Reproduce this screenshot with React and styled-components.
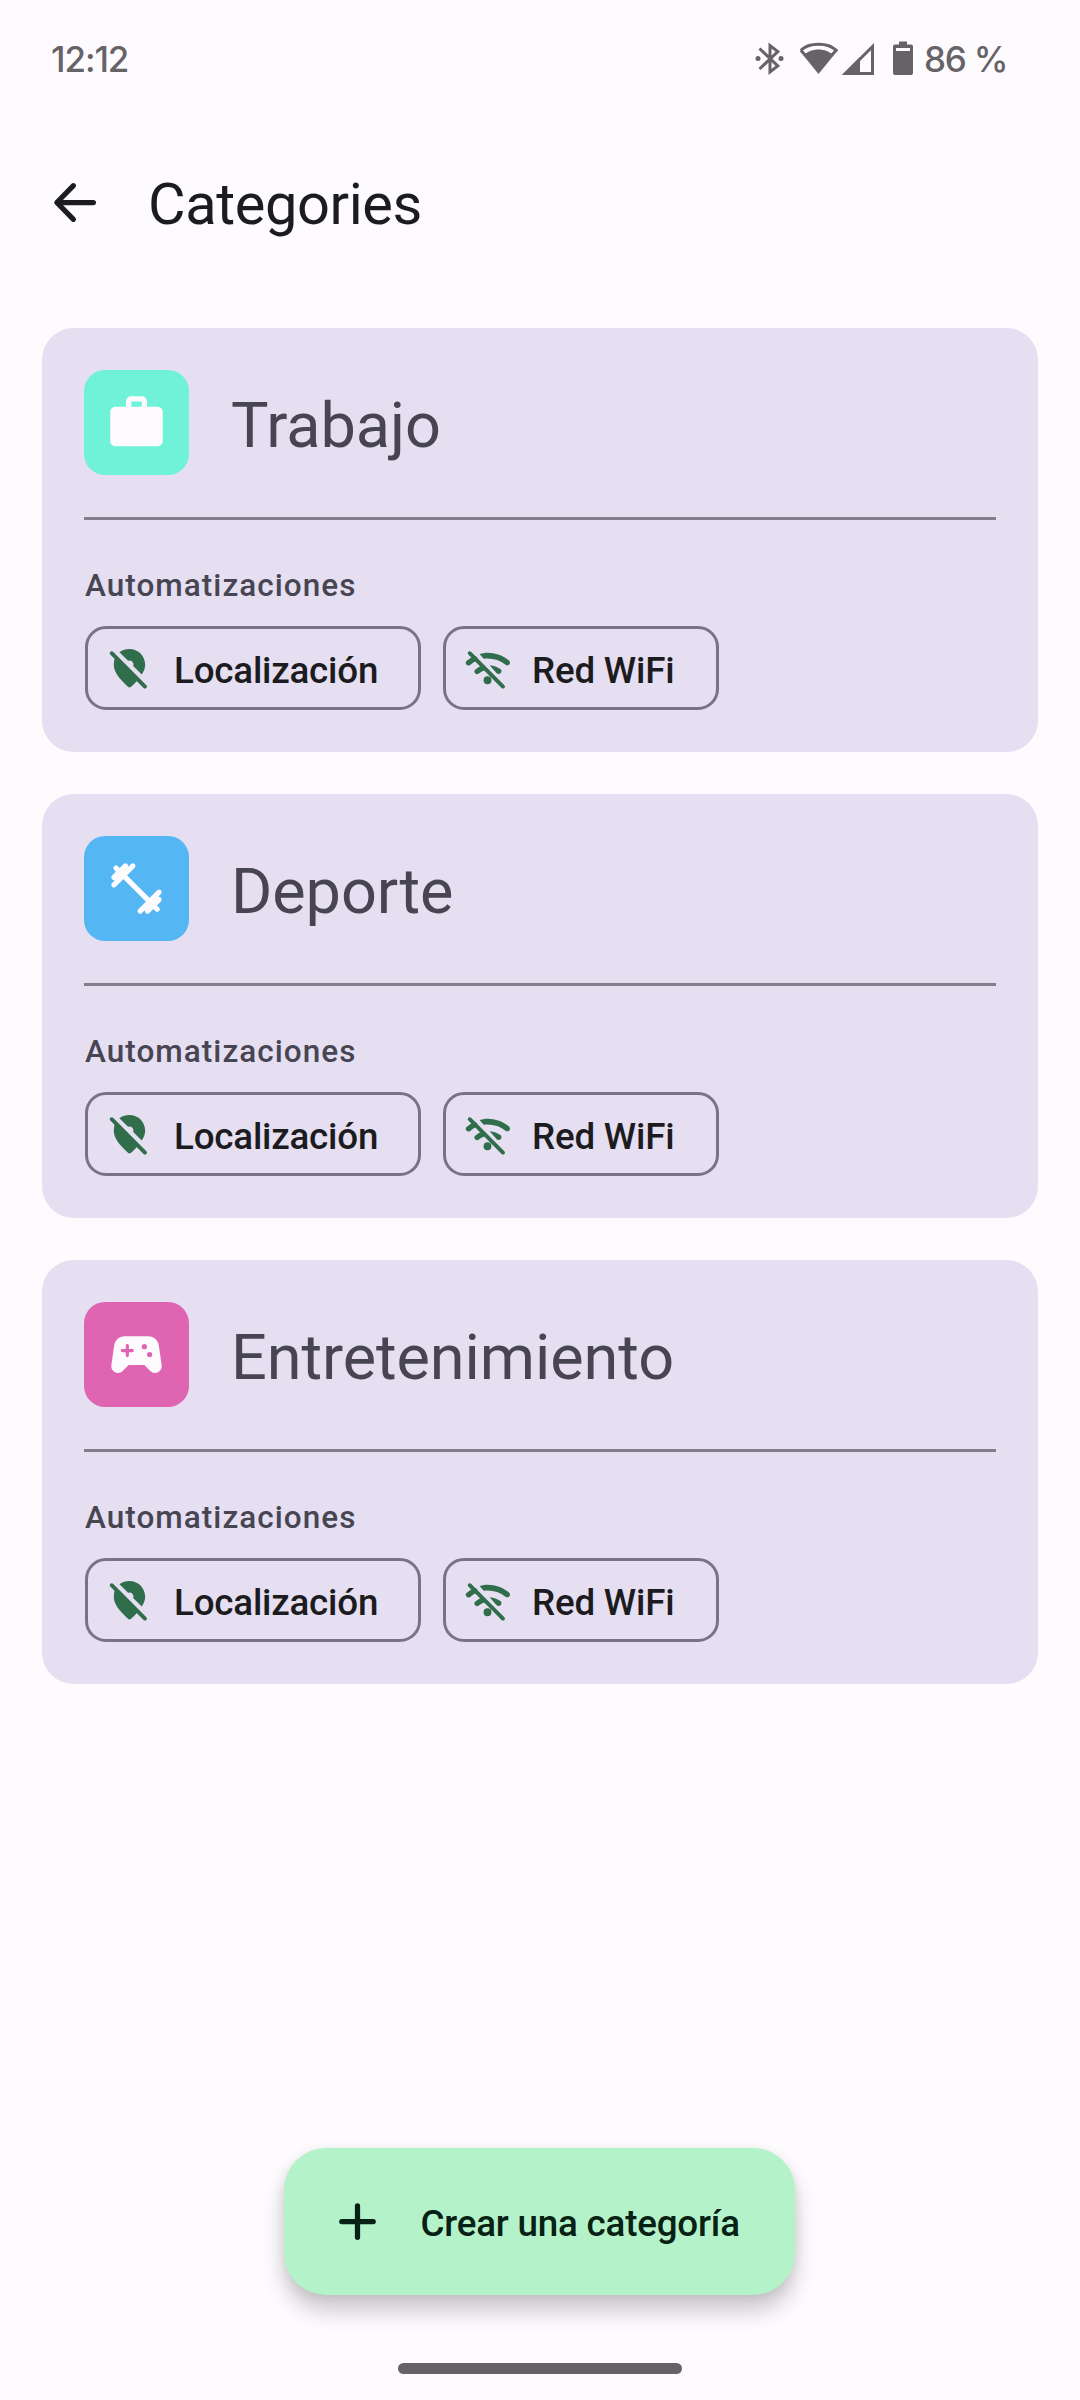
import React from 'react';
import styled, { createGlobalStyle } from 'styled-components';

const GlobalStyle = createGlobalStyle`
  *, *::before, *::after { box-sizing: border-box; }
  body { margin: 0; background: #fefbff; }
  button { font: inherit; border: 0; background: none; padding: 0; color: inherit; }
  svg { display: block; flex: none; }
`;

const Screen = styled.div`
  display: flex;
  flex-direction: column;
  width: 1080px;
  height: 2400px;
  background: #fefbff;
  color: #1c1b20;
  font-family: Roboto, 'Noto Sans', sans-serif;
  overflow: hidden;
`;

const StatusBar = styled.header`
  display: flex;
  justify-content: space-between;
  align-items: center;
  height: 118px;
  padding: 0 0 0 51px;
  color: #666367;
  font-family: Inter, Roboto, sans-serif;
  font-weight: 500;
  font-size: 35px;
  line-height: 44px;
`;

const Clock = styled.span`
  letter-spacing: -1.1px;
`;

const StatusIcons = styled.div`
  display: flex;
  align-items: center;
`;

const Battery = styled.span`
  width: 156px;
  margin-left: 9px;
  letter-spacing: -1.2px;
  white-space: nowrap;
`;

const AppBar = styled.div`
  display: flex;
  align-items: center;
  height: 168px;
  padding: 0 44px;
`;

const BackButton = styled.button`
  display: flex;
`;

const PageTitle = styled.h1`
  margin: 3px 0 0 41px;
  font-size: 57.75px;
  font-weight: 400;
  line-height: 74px;
  letter-spacing: -0.4px;
`;

const CategoryList = styled.main`
  display: flex;
  flex-direction: column;
  gap: 42px;
  padding: 42px;
`;

const Card = styled.section`
  display: flex;
  flex-direction: column;
  height: 424px;
  padding: 42px;
  border-radius: 31.5px;
  background: #e5dff1;
`;

const CardHeader = styled.div`
  display: flex;
  align-items: center;
  gap: 42px;
  height: 105px;
`;

const Tile = styled.div`
  display: flex;
  align-items: center;
  justify-content: center;
  width: 105px;
  height: 105px;
  border-radius: 21px;
  background: ${(p) => p.$color};
  color: #fefbff;
`;

const CardTitle = styled.h2`
  margin: 0;
  padding-top: 6px;
  color: #484553;
  font-size: 63px;
  font-weight: 400;
  line-height: 84px;
  letter-spacing: -0.08px;
`;

const Divider = styled.hr`
  width: 100%;
  height: 3px;
  margin: 42px 0;
  border: 0;
  background: #827e8b;
`;

const SectionLabel = styled.div`
  margin: 2px 0 18px;
  padding-left: 1px;
  color: #484553;
  font-size: 31.5px;
  font-weight: 500;
  line-height: 44px;
  letter-spacing: 1.03px;
`;

const ChipRow = styled.div`
  display: flex;
  gap: 22px;
  padding-left: 1px;
`;

const Chip = styled.button`
  display: flex;
  align-items: center;
  gap: 21px;
  width: ${(p) => p.$width}px;
  height: 84px;
  padding: 0 18px;
  border: 3px solid #787485;
  border-radius: 21px;
  svg { color: #306d4b; }
`;

const ButtonLabel = styled.span`
  padding-top: ${(p) => p.$drop || 4}px;
  font-size: 36.75px;
  font-weight: 500;
  line-height: 52px;
  letter-spacing: -0.2px;
  white-space: nowrap;
`;

const Footer = styled.footer`
  display: flex;
  flex-direction: column;
  align-items: center;
  gap: 68px;
  margin-top: auto;
  padding-bottom: 26px;
`;

const CreateButton = styled.button`
  display: flex;
  align-items: center;
  gap: 31.5px;
  width: 511px;
  height: 147px;
  margin-right: 1px;
  padding: 0 42px;
  border-radius: 42px;
  background: #b4f2ca;
  color: #072114;
  box-shadow: 0 16px 22px rgba(0, 0, 0, 0.2), 0 2px 12px rgba(0, 0, 0, 0.08);
`;

const HomeIndicator = styled.div`
  width: 284px;
  height: 11px;
  border-radius: 6px;
  background: #666367;
`;

const Icon = ({ size, children }) => (
  <svg width={size} height={size} viewBox="0 0 24 24" fill="currentColor" stroke="none">
    {children}
  </svg>
);

const ArrowBack = () => (
  <Icon size={63}>
    <g stroke="currentColor" strokeWidth="2" strokeLinecap="round" strokeLinejoin="round">
      <path d="M5.2 12H18.8" />
      <path d="M11.2 5.6L4.9 12l6.3 6.4" fill="none" />
      <path d="M5 12l2-2v4z" stroke="none" />
    </g>
  </Icon>
);

const Briefcase = () => (
  <Icon size={63}>
    <path
      fillRule="evenodd"
      d="M20 6h-4V4c0-1.11-.89-2-2-2h-4c-1.11 0-2 .89-2 2v2H4c-1.11 0-2 .89-2 2v11c0 1.11.89 2 2 2h16c1.11 0 2-.89 2-2V8c0-1.11-.89-2-2-2zM14 6h-4V4h4z"
    />
  </Icon>
);

const Dumbbell = () => (
  <Icon size={63}>
    <g stroke="currentColor" strokeWidth="2" strokeLinecap="round" strokeLinejoin="round">
      <path d="M7 7l10 10M4.2 4.2L7 7M19.9 19.9L17 17" />
      <path d="M3.4 10.6l7.2-7.2M3.4 7.8l4.4-4.4M5 8.4L8.4 5" />
      <path d="M13.4 20.6l7.2-7.2M16.2 20.6l4.4-4.4M15.6 19l3.4-3.4" />
    </g>
  </Icon>
);

const Gamepad = () => (
  <Icon size={63}>
    <path
      fillRule="evenodd"
      d="M21.58 16.09l-1.09-7.66C20.21 6.46 18.52 5 16.53 5H7.47C5.48 5 3.79 6.46 3.51 8.43l-1.09 7.66C2.2 17.63 3.39 19 4.94 19c.68 0 1.32-.27 1.8-.75L9 16h6l2.25 2.25c.48.48 1.13.75 1.8.75 1.56 0 2.75-1.37 2.53-2.91zM10.4 11.1H9.100v1.300c0 .33-.27.6-.6.6s-.6-.27-.6-.6V11.100H6.600c-.33 0-.6-.27-.6-.6s.27-.6.6-.6H7.900V8.600c0-.33.27-.6.6-.6s.6.27.6.6V9.900h1.300c.33 0 .6.27.6.6s-.27.6-.6.6zM15 10a1 1 0 1 1 0-2 1 1 0 0 1 0 2zM17 13a1 1 0 1 1 0-2 1 1 0 0 1 0 2z"
    />
  </Icon>
);

const LocationOff = () => (
  <Icon size={47}>
    <path d="M6.85 3.65C8.3 2.6 10.1 2 12 2c4.2 0 8 3.22 8 8.2 0 1.500-.6 3.100-1.750 4.850L13.900 10.700A2 2 0 0 0 11.300 8.100z" />
    <path d="M4.700 5.900C4.200 7.300 4 8.800 4 10.200c0 3.180 2.450 6.920 7.340 11.220.38.33.95.33 1.330 0 1.200-1.050 2.200-2.100 3.200-3.200z" />
    <path d="M2.900 4.200l17 17" stroke="currentColor" strokeWidth="2" strokeLinecap="round" />
  </Icon>
);

const WifiOff = () => (
  <Icon size={47}>
    <circle cx="12" cy="18" r="2" />
    <path d="M8 4.700C9.300 4.300 10.600 4 12 4c4.100 0 7.900 1.400 11 3.900.6.5.65 1.400.1 2-.5.55-1.300.6-1.900.15C18.600 8 15.500 6.900 12 6.900c-.6 0-1.300 0-1.900.1z" />
    <path d="M13.100 10.300c2.200.15 4 .9 5.500 2 .65.5.75 1.400.2 2-.5.6-1.400.7-2 .3z" />
    <g fill="none" stroke="currentColor" strokeLinecap="round">
      <path d="M2.300 9.100Q3.800 7.900 5.500 7M6.700 13.500Q8.200 12.200 9.700 11.800" strokeWidth="2.700" />
      <path d="M2.900 4.200l17 17" strokeWidth="2" />
    </g>
  </Icon>
);

const Plus = () => (
  <Icon size={63}>
    <path d="M12 6v12M6 12h12" stroke="currentColor" strokeWidth="2" strokeLinecap="round" />
  </Icon>
);

const SystemIcons = () => (
  <svg width="160" height="36" viewBox="0 0 160 36" fill="currentColor">
    <g fill="none" stroke="currentColor" strokeWidth="3">
      <path d="M4.500 7.500L22.800 25L15 31V4.500L22.800 10.500L4.500 28" />
      <path d="M46 10C54 1.200 73 1.200 81 10L78 13.500C71 7 56 7 49 13.500z" strokeWidth="0" />
      <path d="M45.800 9.200C54 1.200 73 1.200 81.200 9.200L76.500 14.500M45.800 9.200L50.500 14.500" />
      <path d="M90.500 32.500H117.500V5.500z" />
      <path d="M104 18V32" strokeWidth="2" />
    </g>
    <circle cx="3" cy="17.500" r="2.500" />
    <circle cx="26" cy="17.500" r="2.500" />
    <path d="M48.500 14.500C56 6.500 71 6.500 78.500 14.500L63.500 33z" />
    <path d="M87 34L105 16V34z" />
    <path
      fillRule="evenodd"
      d="M144 0.500h8v3h4a2 2 0 0 1 2 2v26.500a2 2 0 0 1-2 2h-16a2 2 0 0 1-2-2V5.500a2 2 0 0 1 2-2h4zM141 7v3h14V7z"
    />
  </svg>
);

const categories = [
  { name: 'Trabajo', color: '#6ff2d7', Glyph: Briefcase },
  { name: 'Deporte', color: '#54b7f3', Glyph: Dumbbell },
  { name: 'Entretenimiento', color: '#df65b3', Glyph: Gamepad },
];

const automations = [
  { label: 'Localización', width: 336, Glyph: LocationOff },
  { label: 'Red WiFi', width: 276, Glyph: WifiOff },
];

const CategoryCard = ({ name, color, Glyph }) => (
  <Card>
    <CardHeader>
      <Tile $color={color}>
        <Glyph />
      </Tile>
      <CardTitle>{name}</CardTitle>
    </CardHeader>
    <Divider />
    <SectionLabel>Automatizaciones</SectionLabel>
    <ChipRow>
      {automations.map(({ label, width, Glyph: ChipGlyph }) => (
        <Chip key={label} $width={width}>
          <ChipGlyph />
          <ButtonLabel $drop={6}>{label}</ButtonLabel>
        </Chip>
      ))}
    </ChipRow>
  </Card>
);

export default function App() {
  return (
    <>
      <GlobalStyle />
      <Screen>
        <StatusBar>
          <Clock>12:12</Clock>
          <StatusIcons>
            <SystemIcons />
            <Battery>86 %</Battery>
          </StatusIcons>
        </StatusBar>
        <AppBar>
          <BackButton aria-label="Back">
            <ArrowBack />
          </BackButton>
          <PageTitle>Categories</PageTitle>
        </AppBar>
        <CategoryList>
          {categories.map((category) => (
            <CategoryCard key={category.name} {...category} />
          ))}
        </CategoryList>
        <Footer>
          <CreateButton>
            <Plus />
            <ButtonLabel>Crear una categoría</ButtonLabel>
          </CreateButton>
          <HomeIndicator />
        </Footer>
      </Screen>
    </>
  );
}
